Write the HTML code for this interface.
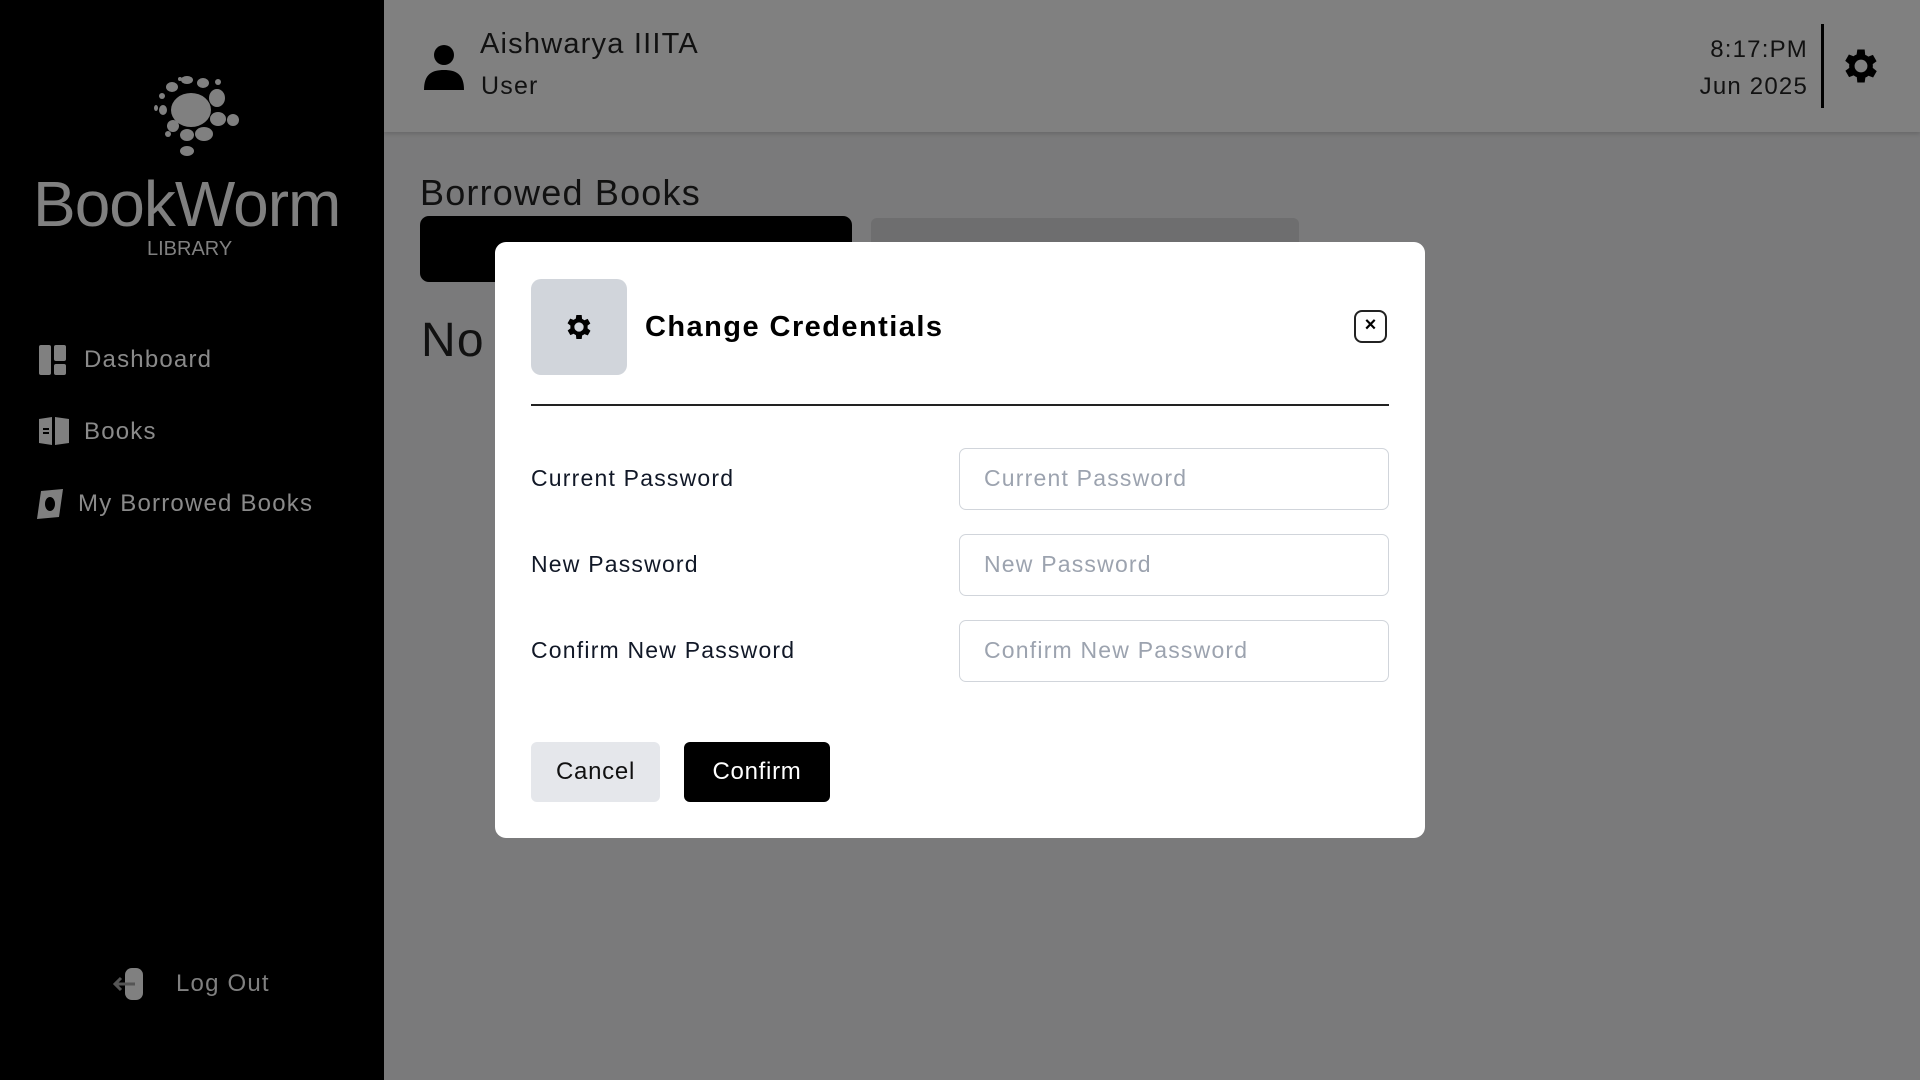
<!DOCTYPE html>
<html><head><meta charset="utf-8"><style>
*{margin:0;padding:0;box-sizing:border-box}
body{width:1920px;height:1080px;overflow:hidden;font-family:"Liberation Sans",sans-serif;background:#7a7a7b;position:relative;letter-spacing:.075em}
.side{position:absolute;left:0;top:0;width:384px;height:1080px;background:#000}
.hdr{position:absolute;left:384px;top:0;width:1536px;height:132px;background:#808080;box-shadow:0 2px 4px rgba(0,0,0,.15)}
.abs{position:absolute;white-space:nowrap}
.nav{color:#8a8a8a;font-size:24px}
.modal{position:absolute;left:495px;top:242px;width:930px;height:596px;background:#fff;border-radius:11px}
.lbl{position:absolute;left:36px;font-size:23px;color:#111827}
.inp{position:absolute;left:464px;width:430px;height:62px;border:1.5px solid #d1d5db;border-radius:7px;font-size:23px;color:#9ca3af;padding-left:24px;line-height:59px}
</style></head><body>
<div class="side">
 <svg class="abs" style="left:135px;top:70px" width="112" height="90" viewBox="0 0 112 90" fill="#808080">
  <ellipse cx="56" cy="40" rx="20" ry="17"/>
  <ellipse cx="37" cy="17" rx="6" ry="5"/><ellipse cx="52" cy="10" rx="6" ry="4"/><ellipse cx="68" cy="13" rx="6" ry="5"/>
  <ellipse cx="82" cy="28" rx="8" ry="9"/><ellipse cx="83" cy="49" rx="8" ry="7"/><ellipse cx="98" cy="50" rx="6" ry="6"/>
  <ellipse cx="69" cy="64" rx="9" ry="7"/><ellipse cx="52" cy="65" rx="7" ry="6"/><ellipse cx="38" cy="56" rx="6" ry="6"/>
  <ellipse cx="28" cy="40" rx="4" ry="5"/><ellipse cx="27" cy="26" rx="3" ry="3"/><ellipse cx="21" cy="38" rx="2" ry="3"/>
  <ellipse cx="33" cy="64" rx="3" ry="3"/><ellipse cx="52" cy="81" rx="7" ry="5"/><ellipse cx="45" cy="9" rx="2" ry="2"/><ellipse cx="83" cy="12" rx="3" ry="3"/>
 </svg>
 <div class="abs" style="left:33px;top:167px;font-size:64px;color:#808080;letter-spacing:-1px">BookWorm</div>
 <div class="abs" style="left:147px;top:238px;font-size:20px;color:#808080;letter-spacing:0">LIBRARY</div>
 <svg class="abs" style="left:39px;top:345px" width="28" height="30" fill="#808080"><rect x="0" y="0" width="12" height="30" rx="2"/><rect x="15" y="0" width="12" height="16" rx="2"/><rect x="15" y="19" width="12" height="11" rx="2"/></svg>
 <div class="abs nav" style="left:84px;top:346px">Dashboard</div>
 <svg class="abs" style="left:39px;top:417px" width="30" height="28" fill="#808080"><path d="M0 2 L13 0 L13 28 L0 26Z"/><path d="M16 0 L30 2 L30 26 L16 28Z"/><rect x="4" y="11" width="6" height="2" fill="#000"/><rect x="4" y="15" width="6" height="2" fill="#000"/></svg>
 <div class="abs nav" style="left:84px;top:418px">Books</div>
 <svg class="abs" style="left:35px;top:489px" width="30" height="30" fill="#808080"><path d="M6 2 L28 0 L24 28 L2 30Z"/><ellipse cx="15" cy="15" rx="5" ry="7" fill="#000"/></svg>
 <div class="abs nav" style="left:78px;top:490px">My Borrowed Books</div>
 <svg class="abs" style="left:111px;top:968px" width="34" height="32"><rect x="14" y="0" width="18" height="32" rx="7" fill="#808080"/><path d="M24 16 H4 M10 10 L4 16 L10 22" stroke="#555" stroke-width="3" fill="none"/></svg>
 <div class="abs nav" style="left:176px;top:970px;color:#808080">Log Out</div>
</div>
<div class="hdr">
 <svg class="abs" style="left:40px;top:44px" width="40" height="46" fill="#000"><circle cx="20" cy="11" r="10"/><path d="M0 46 C0 30 8 26 20 26 C32 26 40 30 40 46Z"/></svg>
 <div class="abs" style="left:96px;top:28px;font-size:29px;color:#111">Aishwarya IIITA</div>
 <div class="abs" style="left:97px;top:72px;font-size:25px;color:#111">User</div>
 <div class="abs" style="right:112px;top:31px;font-size:24px;color:#111;text-align:right;line-height:37px">8:17:PM<br>Jun 2025</div>
 <div class="abs" style="left:1437px;top:24px;width:3px;height:84px;background:#000"></div>
 <svg class="abs" style="left:1455px;top:44px" width="44" height="44" viewBox="0 0 24 24"><path fill="#000" d="M19.4 13a7.5 7.5 0 000-2l2.1-1.6-2-3.5-2.5 1a7 7 0 00-1.7-1L15 3h-4l-.4 2.7a7 7 0 00-1.7 1l-2.5-1-2 3.5L6.6 11a7.5 7.5 0 000 2l-2.1 1.6 2 3.5 2.5-1a7 7 0 001.7 1L11 21h4l.4-2.7a7 7 0 001.7-1l2.5 1 2-3.5zM13 15.5A3.5 3.5 0 1113 8.5a3.5 3.5 0 010 7z" transform="translate(-1 0)"/></svg>
</div>
<div class="abs" style="left:420px;top:172px;font-size:36px;color:#111">Borrowed Books</div>
<div class="abs" style="left:420px;top:216px;width:432px;height:66px;background:#000;border-radius:9px"></div>
<div class="abs" style="left:871px;top:218px;width:428px;height:66px;background:#6e6e6f;border-radius:6px"></div>
<div class="abs" style="left:421px;top:313px;font-size:48px;color:#111">No</div>
<div class="modal">
 <div class="abs" style="left:36px;top:37px;width:96px;height:96px;background:#d1d5db;border-radius:10px"></div>
 <svg class="abs" style="left:68px;top:69px" width="32" height="32" viewBox="0 0 24 24"><path fill="#000" d="M19.4 13a7.5 7.5 0 000-2l2.1-1.6-2-3.5-2.5 1a7 7 0 00-1.7-1L15 3h-4l-.4 2.7a7 7 0 00-1.7 1l-2.5-1-2 3.5L6.6 11a7.5 7.5 0 000 2l-2.1 1.6 2 3.5 2.5-1a7 7 0 001.7 1L11 21h4l.4-2.7a7 7 0 001.7-1l2.5 1 2-3.5zM13 15.5A3.5 3.5 0 1113 8.5a3.5 3.5 0 010 7z" transform="translate(-1 0)"/></svg>
 <div class="abs" style="left:150px;top:69px;font-size:29px;font-weight:bold;color:#000;letter-spacing:.05em">Change Credentials</div>
 <div class="abs" style="left:859px;top:68px;width:33px;height:33px;border:2.5px solid #222;border-radius:8px;text-align:center;font-size:20px;line-height:27px;font-weight:bold;letter-spacing:0">×</div>
 <div class="abs" style="left:36px;top:162px;width:858px;height:1.5px;background:#222"></div>
 <div class="lbl" style="top:223px">Current Password</div>
 <div class="lbl" style="top:309px">New Password</div>
 <div class="lbl" style="top:395px">Confirm New Password</div>
 <div class="inp" style="top:206px">Current Password</div>
 <div class="inp" style="top:292px">New Password</div>
 <div class="inp" style="top:378px">Confirm New Password</div>
 <div class="abs" style="left:36px;top:500px;width:129px;height:60px;background:#e5e7eb;border-radius:6px;font-size:24px;line-height:60px;text-align:center;color:#111;letter-spacing:.03em">Cancel</div>
 <div class="abs" style="left:189px;top:500px;width:146px;height:60px;background:#000;border-radius:6px;font-size:24px;line-height:60px;text-align:center;color:#fff;letter-spacing:.03em">Confirm</div>
</div>
</body></html>
